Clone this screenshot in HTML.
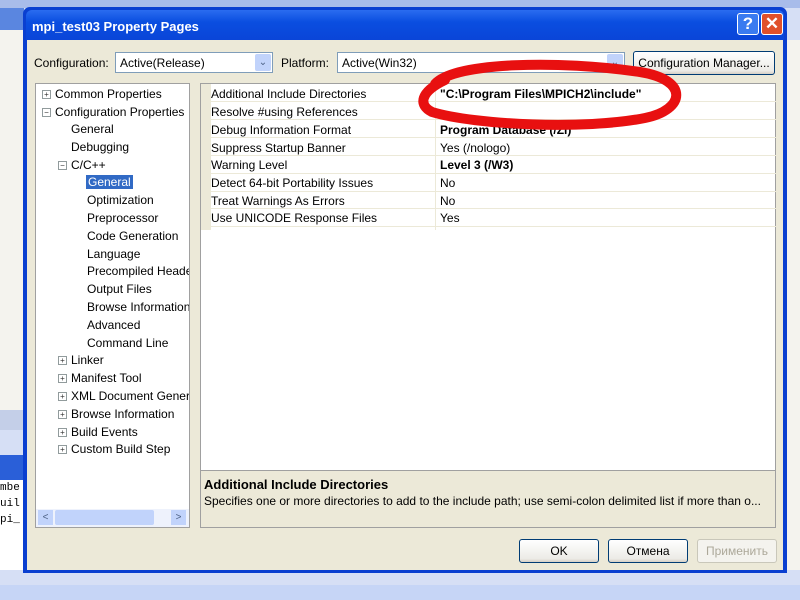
<!DOCTYPE html>
<html><head><style>
*{margin:0;padding:0;box-sizing:border-box}
body{width:800px;height:600px;overflow:hidden;position:relative;background:#d6dff5;font-family:"Liberation Sans",sans-serif;font-size:12px;color:#000}
.abs{position:absolute}
.dlg{left:23px;top:7px;width:764px;height:566px;background:#0a3fd0;border-radius:7px 7px 0 0}
.title{left:26px;top:10px;width:758px;height:30px;background:linear-gradient(#2a6cf0,#0a4ee0 40%,#0a45d8);color:#fff;font-weight:bold;font-size:13px;padding:9px 0 0 6px;border-radius:6px 6px 0 0}
.body{left:27px;top:40px;width:756px;height:530px;background:#ece9d8}
.sel{border:1px solid #7f9db9;background:#fff;height:21px;padding:3px 4px;font-size:12px}
.arr{position:absolute;right:1px;top:1px;width:16px;height:17px;background:#c1d3fb;border-radius:2px;color:#4d6185;font-size:10px;text-align:center;line-height:17px}
.btn{border:1px solid #003c74;border-radius:3px;background:linear-gradient(#fff,#ecebe6 85%,#d6d0c5);text-align:center;font-size:12px;line-height:22px;height:24px}
.tree{overflow:hidden}
.tree div{position:absolute;white-space:nowrap;font-size:12px}
.grid div{position:absolute;font-size:12px;white-space:nowrap}
.pm{display:inline-block;width:9px;height:9px;border:1px solid #919b9c;font-size:8px;line-height:7px;text-align:center;color:#333;background:#fff;margin-right:4px;vertical-align:1px}
</style></head><body>
<div class="abs" style="left:0;top:0;width:800px;height:8px;background:#a8bcea"></div>
<div class="abs" style="left:0;top:8px;width:24px;height:40px;background:#5a86e0"></div>
<div class="abs" style="left:0;top:30px;width:24px;height:380px;background:#f4f3ee"></div>
<div class="abs" style="left:0;top:410px;width:24px;height:20px;background:#c4cfe8"></div>
<div class="abs" style="left:0;top:455px;width:24px;height:25px;background:#2a5fd8"></div>
<div class="abs" style="left:0;top:480px;width:24px;height:90px;background:#fff;font-family:'Liberation Mono';font-size:11px;line-height:16px">mbe<br>uil<br>pi_</div>
<div class="abs" style="left:786px;top:40px;width:14px;height:530px;background:#f4f3ee"></div>
<div class="abs" style="left:0;top:585px;width:800px;height:15px;background:#c6d5f6"></div>
<div class="abs dlg"></div>
<div class="abs title">mpi_test03 Property Pages</div>
<div class="abs" style="left:737px;top:13px;width:22px;height:22px;background:#3a7bf0;border:1px solid #fff;border-radius:3px;color:#fff;font-weight:bold;font-size:17px;text-align:center;line-height:20px">?</div>
<div class="abs" style="left:761px;top:13px;width:22px;height:22px;background:#e0502a;border:1px solid #fff;border-radius:3px;color:#fff;font-weight:bold;font-size:17px;text-align:center;line-height:20px">✕</div>
<div class="abs body"></div>
<div class="abs" style="left:34px;top:56px">Configuration:</div>
<div class="abs sel" style="left:115px;top:52px;width:158px">Active(Release)<span class="arr">⌄</span></div>
<div class="abs" style="left:281px;top:56px">Platform:</div>
<div class="abs sel" style="left:337px;top:52px;width:288px">Active(Win32)<span class="arr">⌄</span></div>
<div class="abs btn" style="left:633px;top:51px;width:142px">Configuration Manager...</div>
<div class="abs tree" style="left:35px;top:83px;width:155px;height:445px;background:#fff;border:1px solid #a0a0a0">
<div style="left:6px;top:3px"><span class="pm">+</span>Common Properties</div>
<div style="left:6px;top:21px"><span class="pm">−</span>Configuration Properties</div>
<div style="left:35px;top:38px">General</div>
<div style="left:35px;top:56px">Debugging</div>
<div style="left:22px;top:74px"><span class="pm">−</span>C/C++</div>
<div style="left:50px;top:91px;background:#316ac5;color:#fff;padding:0 2px">General</div>
<div style="left:51px;top:109px">Optimization</div>
<div style="left:51px;top:127px">Preprocessor</div>
<div style="left:51px;top:145px">Code Generation</div>
<div style="left:51px;top:163px">Language</div>
<div style="left:51px;top:180px">Precompiled Header</div>
<div style="left:51px;top:198px">Output Files</div>
<div style="left:51px;top:216px">Browse Information</div>
<div style="left:51px;top:234px">Advanced</div>
<div style="left:51px;top:252px">Command Line</div>
<div style="left:22px;top:269px"><span class="pm">+</span>Linker</div>
<div style="left:22px;top:287px"><span class="pm">+</span>Manifest Tool</div>
<div style="left:22px;top:305px"><span class="pm">+</span>XML Document Genera</div>
<div style="left:22px;top:323px"><span class="pm">+</span>Browse Information</div>
<div style="left:22px;top:341px"><span class="pm">+</span>Build Events</div>
<div style="left:22px;top:358px"><span class="pm">+</span>Custom Build Step</div>
<div style="left:0;top:425px;width:153px;height:18px;background:#eef2fc"></div>
<div style="left:2px;top:426px;width:15px;height:15px;background:#c1d3fb;color:#4d6185;text-align:center;line-height:15px;font-size:10px">&lt;</div>
<div style="left:19px;top:426px;width:99px;height:15px;background:#c1d3fb;border-radius:2px"></div>
<div style="left:135px;top:426px;width:15px;height:15px;background:#c1d3fb;color:#4d6185;text-align:center;line-height:15px;font-size:10px">&gt;</div>
</div>
<div class="abs grid" style="left:200px;top:83px;width:576px;height:388px;background:#fff;border:1px solid #a0a0a0">
<div style="left:0;top:0;width:10px;height:146px;background:#ece9d8"></div>
<div style="left:10px;top:3px">Additional Include Directories</div>
<div style="left:10px;top:21px">Resolve #using References</div>
<div style="left:10px;top:39px">Debug Information Format</div>
<div style="left:10px;top:57px">Suppress Startup Banner</div>
<div style="left:10px;top:74px">Warning Level</div>
<div style="left:10px;top:92px">Detect 64-bit Portability Issues</div>
<div style="left:10px;top:110px">Treat Warnings As Errors</div>
<div style="left:10px;top:127px">Use UNICODE Response Files</div>
<div style="left:239px;top:3px;font-weight:bold">"C:\Program Files\MPICH2\include"</div>
<div style="left:239px;top:39px;font-weight:bold">Program Database (/Zi)</div>
<div style="left:239px;top:57px">Yes (/nologo)</div>
<div style="left:239px;top:74px;font-weight:bold">Level 3 (/W3)</div>
<div style="left:239px;top:92px">No</div>
<div style="left:239px;top:110px">No</div>
<div style="left:239px;top:127px">Yes</div>
<div style="left:234px;top:0;width:1px;height:146px;background:#ece9d8"></div>
<div style="left:10px;top:17px;width:566px;height:1px;background:#ece9d8"></div>
<div style="left:10px;top:35px;width:566px;height:1px;background:#ece9d8"></div>
<div style="left:10px;top:53px;width:566px;height:1px;background:#ece9d8"></div>
<div style="left:10px;top:71px;width:566px;height:1px;background:#ece9d8"></div>
<div style="left:10px;top:89px;width:566px;height:1px;background:#ece9d8"></div>
<div style="left:10px;top:107px;width:566px;height:1px;background:#ece9d8"></div>
<div style="left:10px;top:124px;width:566px;height:1px;background:#ece9d8"></div>
<div style="left:10px;top:142px;width:566px;height:1px;background:#ece9d8"></div>
</div>
<div class="abs" style="left:200px;top:470px;width:576px;height:58px;border:1px solid #a0a0a0;background:#ece9d8;padding:6px 3px">
<div style="font-weight:bold;font-size:13px">Additional Include Directories</div>
<div style="margin-top:2px;white-space:nowrap">Specifies one or more directories to add to the include path; use semi-colon delimited list if more than o...</div>
</div>
<div class="abs btn" style="left:519px;top:539px;width:80px">OK</div>
<div class="abs btn" style="left:608px;top:539px;width:80px">Отмена</div>
<div class="abs btn" style="left:697px;top:539px;width:80px;color:#aca899;border-color:#c9c7ba;background:#f4f3ee">Применить</div>
<svg class="abs" style="left:0;top:0" width="800" height="600"><path d="M435 84 C455 62,560 60,640 72 C690 80,685 110,645 118 C585 130,475 125,432 112 C418 105,420 92,445 80" fill="none" stroke="#e81010" stroke-width="10" stroke-linecap="round"/></svg>
</body></html>
